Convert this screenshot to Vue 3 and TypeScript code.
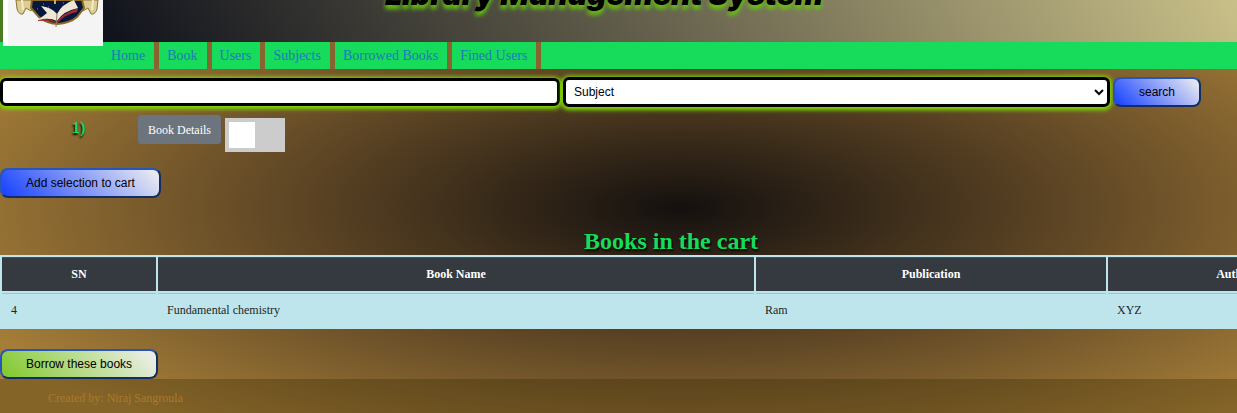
<script setup lang="ts">
import { ref } from 'vue'

interface CartBook {
  sn: number
  name: string
  publication: string
  author: string
}

const links: string[] = ['Home', 'Book', 'Users', 'Subjects', 'Borrowed Books', 'Fined Users']
const query = ref('')
const searchBy = ref('Subject')
const selected = ref(false)
const cart: CartBook[] = [{ sn: 4, name: 'Fundamental chemistry', publication: 'Ram', author: 'XYZ' }]
</script>

<template>
  <div class="page">
    <header class="banner">
      <svg class="logo" viewBox="0 0 100 46" role="img" aria-label="Library crest">
        <rect width="100" height="46" fill="#f4f4f4" />
        <rect width="5" height="46" fill="#ffffff" />
        <path d="M13 0L14 9Q16 15 20 14L23 8L28 11L34 0Z" fill="#dccd94" stroke="#8b7435" stroke-width="1" />
        <path d="M95 0L94 9Q92 15 88 14L85 8L80 11L74 0Z" fill="#dccd94" stroke="#8b7435" stroke-width="1" />
        <path d="M19 0L20 10M90 0L89 10" stroke="#f4ecc4" stroke-width="2" />
        <path d="M29 0L28 8L36 17Q43 23 54 24Q67 23 74 17L81 8L79 0Z" fill="#07163c" stroke="#8a6a22" stroke-width="2" />
        <path d="M52 0V4" stroke="#d6ae4b" stroke-width="2" />
        <path d="M40 4h1M60 3h1M68 4h1M45 7h1M34 9h1" stroke="#7e8cae" stroke-width="1" />
        <path d="M35 20Q45 17 54 22Q58 14 75 8L74 12Q60 15 55 23Q45 20 35 21Z" fill="#a42832" />
        <path d="M38 6Q48 7 54 14Q59 4 71 0L75 8Q60 11 54 21Q46 17 35 20L44 13Z" fill="#eee7d5" />
        <path d="M54 14L53 27" stroke="#8e815e" stroke-width="1" />
      </svg>
      <h1 class="title">Library Management System</h1>
    </header>

    <nav class="nav">
      <a v-for="link in links" :key="link" href="#" class="nav-link">{{ link }}</a>
    </nav>

    <form class="search" @submit.prevent>
      <input v-model="query" class="field query" type="text" aria-label="Search text" />
      <select v-model="searchBy" class="field choice" aria-label="Search by">
        <option>Subject</option>
        <option>Book</option>
      </select>
      <button type="submit" class="btn blue">search</button>
    </form>

    <div class="result">
      <span class="index">1)</span>
      <button type="button" class="details">Book Details</button>
      <label class="toggle">
        <input v-model="selected" type="checkbox" aria-label="Select this book" />
        <span class="knob"></span>
      </label>
    </div>

    <button type="button" class="btn blue">Add selection to cart</button>

    <section class="cart">
      <h2 class="cart-title">Books in the cart</h2>
      <table class="table">
        <thead>
          <tr>
            <th class="col-sn">SN</th>
            <th class="col-name">Book Name</th>
            <th class="col-pub">Publication</th>
            <th>Author</th>
          </tr>
        </thead>
        <tbody>
          <tr v-for="book in cart" :key="book.sn">
            <td>{{ book.sn }}</td>
            <td>{{ book.name }}</td>
            <td>{{ book.publication }}</td>
            <td>{{ book.author }}</td>
          </tr>
        </tbody>
      </table>
    </section>

    <button type="button" class="btn green">Borrow these books</button>

    <footer class="footer">Created by: Niraj Sangroula</footer>
  </div>
</template>

<style>
body {
  margin: 0;
  overflow: hidden;
}
</style>

<style scoped>
.page {
  overflow: hidden;
  min-height: 100vh;
  display: flex;
  flex-direction: column;
  align-items: flex-start;
  font-family: "Liberation Serif", serif;
  font-size: 12px;
  line-height: 18px;
  color: #212529;
  background: radial-gradient(ellipse 970px 342px at 55% 208px, #14100f 0%, #5c4424 39%, #a88039 82%, #a88039 100%);
}
.banner {
  width: 100%;
  height: 42px;
  box-sizing: border-box;
  display: flex;
  align-items: flex-end;
  border-left: 3px solid #4c7a1e;
  background: linear-gradient(60deg, #10121c 8%, #64604c 52%, #c8bf88 100%);
}
.logo {
  position: relative;
  flex: none;
  width: 100px;
  height: 46px;
  margin-bottom: -4px;
}
.title {
  margin: 0 0 0 282px;
  padding-bottom: 32px;
  font: italic 900 30px/32px Inter, sans-serif;
  white-space: nowrap;
  color: #000;
  text-shadow: 0 4px 4px #66cc08;
}
.nav {
  width: 100%;
  box-sizing: border-box;
  display: flex;
  padding-left: 103px;
  background: #16db5b;
}
.nav-link {
  padding: 0 9px 0 8px;
  border-right: 5px solid #86652f;
  font-size: 14px;
  line-height: 27px;
  color: #1f7abb;
  text-decoration: none;
}
.search {
  width: 100%;
  display: flex;
  align-items: center;
  gap: 3px;
  margin-top: 8px;
}
.field {
  box-sizing: border-box;
  height: 28px;
  border: 3px solid #000;
  border-radius: 6px;
  background: #fff;
  box-shadow: 0 1px 4px 2px #7fe000;
  font: 12px/18px "Liberation Sans", sans-serif;
  color: #000;
}
.query {
  flex: 0 1 560px;
  padding: 0 6px;
}
.choice {
  flex: 0 1 547px;
  height: 30px;
  padding: 0 4px;
}
.btn {
  height: 30px;
  padding: 0 24px;
  border: 2px outset #2656b8;
  border-radius: 8px;
  font: 12px/18px "Liberation Sans", sans-serif;
  color: #000;
}
.blue {
  background: linear-gradient(45deg, #1640ff, #f0f0f0);
}
.green {
  margin-top: 20px;
  background: linear-gradient(45deg, #80c82a, #f0f0f0);
}
.result {
  display: flex;
  align-items: flex-start;
  margin: 8px 0 16px 72px;
}
.index {
  width: 66px;
  padding-top: 4px;
  font-size: 16px;
  font-weight: bold;
  color: #16db5b;
  text-shadow: -1px 2px 2px #000;
}
.details {
  height: 29px;
  padding: 0 10px;
  border: 0;
  border-radius: 3px;
  background: #6c757d;
  font: 12px/18px "Liberation Serif", serif;
  color: #fff;
}
.toggle {
  box-sizing: border-box;
  width: 60px;
  height: 34px;
  margin: 3px 0 0 4px;
  padding: 4px;
  background: #ccc;
}
.toggle input {
  position: absolute;
  opacity: 0;
}
.knob {
  display: block;
  width: 26px;
  height: 26px;
  background: #fff;
}
.toggle input:checked + .knob {
  margin-left: auto;
}
.cart {
  width: 108.5%;
}
.cart-title {
  margin: 30px 0 0;
  font-size: 24px;
  line-height: 27px;
  text-align: center;
  color: #16db5b;
  text-shadow: 1px 2px 2px #000;
}
.table {
  width: 101.6%;
  table-layout: fixed;
  border-collapse: separate;
  border-spacing: 2px;
  background: #bee5eb;
}
.table th,
.table td {
  padding: 7px 9px 8px;
}
.table th {
  border-top: 1px solid #454d55;
  background: #343a40;
  color: #fff;
}
.table td {
  border-top: 1px solid #86cfda;
}
.col-sn {
  width: 136px;
}
.col-name {
  width: 578px;
}
.col-pub {
  width: 332px;
}
.footer {
  width: 100%;
  box-sizing: border-box;
  flex: 1;
  padding: 10px 48px 6px;
  background: rgba(50, 35, 0, 0.3);
  color: #ab7a2b;
}
</style>
